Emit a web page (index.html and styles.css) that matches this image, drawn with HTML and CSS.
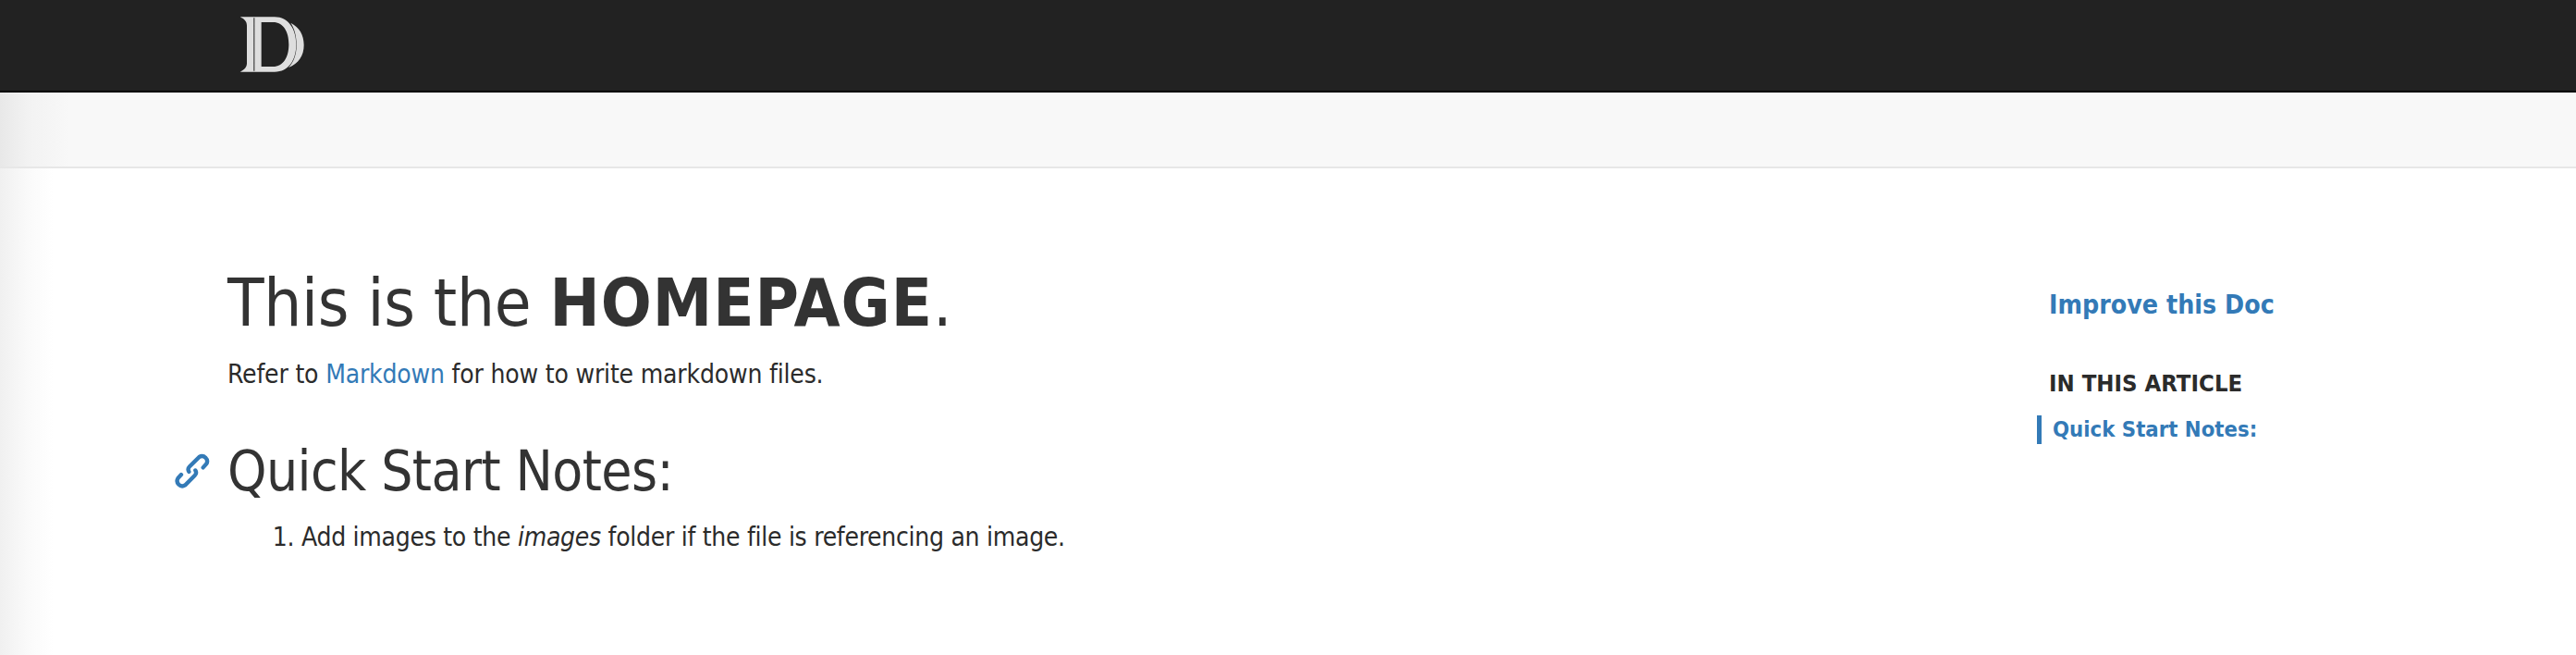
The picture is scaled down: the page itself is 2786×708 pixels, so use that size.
FILE: index.html
```html
<!DOCTYPE html>
<html lang="en">
<head>
    <meta charset="UTF-8">
    <meta name="viewport" content="width=device-width, initial-scale=1.0">
    <title>Homepage</title>
    <link rel="stylesheet" href="styles.css">
</head>
<body>
    <!-- Top bar -->
    <header class="topbar">
        <a class="logo" href="#" aria-label="Home">
            <svg width="75" height="66" viewBox="170 45 225 198">
                <path fill="#dedede" d="M178 55H290C335 55 360 95 360 144C360 195 335 233 290 233H178C192 226 200 218 200 205V83C200 70 192 62 178 55Z"/>
                <path fill="#222" d="M222 58H225V230H222ZM247 72H285C318 72 336 102 336 144C336 186 318 216 285 216H247Z"/>
                <path fill="#dedede" d="M342 74C370 88 385 112 385 146C385 180 368 206 335 219C352 202 361 176 361 146C361 118 355 94 342 74Z"/>
            </svg>
        </a>
    </header>

    <!-- Breadcrumb strip, empty on the homepage -->
    <div class="subbar"></div>

    <div class="page">
        <main class="article">
            <h1>This is the <strong>HOMEPAGE</strong>.</h1>
            <p>Refer to <a href="#">Markdown</a> for how to write markdown files.</p>
            <h2>
                <a class="anchor" href="#" aria-label="Link to section">
                    <svg width="40" height="40" viewBox="85 95 115 115" fill="none" stroke="#337ab7" stroke-width="12.5" stroke-linecap="round">
                        <path d="M176 142L186 131A16 16 0 0 0 164 109L134 139A13 13 0 0 0 132 155"/>
                        <path d="M108 164L98 175A16 16 0 0 0 120 197L150 167A13 13 0 0 0 152 151"/>
                    </svg>
                </a>
                Quick Start Notes:
            </h2>
            <ol>
                <li>Add images to the <em>images</em> folder if the file is referencing an image.</li>
            </ol>
        </main>

        <aside class="sidebar">
            <a class="improve" href="#">Improve this Doc</a>
            <h5>IN THIS ARTICLE</h5>
            <a class="toc-link" href="#">Quick Start Notes:</a>
        </aside>
    </div>
</body>
</html>
```

FILE: styles.css
```css
html, body {
    margin: 0;
    padding: 0;
}
body {
    font-family: "DejaVu Sans", Verdana, sans-serif;
    font-stretch: condensed;
    color: #333;
    background: #fff;
}
a {
    color: #337ab7;
    text-decoration: none;
}
.topbar {
    height: 83px;
    padding: 15px 0 0 257px;
    background: #222;
    border-bottom: 2px solid #000;
}
.logo {
    display: block;
    width: 75px;
    height: 66px;
}
.logo svg {
    display: block;
}
.subbar {
    height: 80px;
    background: linear-gradient(90deg, #e8e8e8, #f2f2f2 30px, #f8f8f8 75px);
    border-bottom: 2px solid #e7e7e7;
}
.page {
    display: flex;
    justify-content: space-between;
    height: 526px;
    background: linear-gradient(90deg, #f0f0f0, #fafafa 30px, #fff 58px);
}
.article {
    padding: 105px 0 0 246px;
}
h1 {
    margin: 0;
    font-size: 72px;
    font-weight: 400;
    line-height: 80px;
    letter-spacing: -0.3px;
}
h1 strong {
    letter-spacing: 1px;
}
.article p {
    margin: 20px 0 0;
    font-size: 28px;
    line-height: 36px;
    letter-spacing: -0.18px;
    color: #2b2b2b;
}
h2 {
    position: relative;
    margin: 53px 0 0;
    font-size: 60px;
    font-weight: 400;
    line-height: 66px;
    letter-spacing: -0.6px;
}
.anchor {
    position: absolute;
    left: -58px;
    top: 13px;
}
.anchor svg {
    display: block;
}
ol {
    margin: 21px 0 0;
    padding: 0 0 0 80px;
    font-size: 28px;
    line-height: 36px;
    letter-spacing: -0.28px;
    color: #2b2b2b;
}
.sidebar {
    display: flex;
    flex-direction: column;
    align-items: flex-start;
    width: 570px;
    padding-top: 129px;
    font-weight: 700;
}
.improve {
    font-size: 28.3px;
    line-height: 38px;
}
h5 {
    margin: 47px 0 0;
    font-size: 25.5px;
    line-height: 36px;
    font-weight: 700;
    color: #2b2b2b;
}
.toc-link {
    margin: 17px 0 0 -13px;
    padding-left: 12px;
    border-left: 5px solid #337ab7;
    font-size: 23.7px;
    line-height: 31px;
}
```
